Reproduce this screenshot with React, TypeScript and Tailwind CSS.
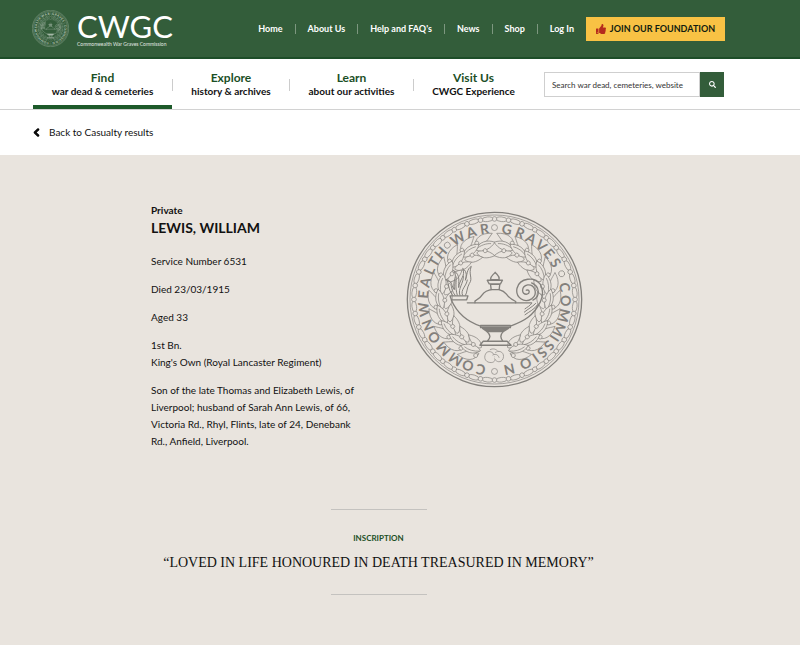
import { FaChevronLeft, FaSearch, FaThumbsUp } from "react-icons/fa";

const topLinks = ["Home", "About Us", "Help and FAQ's", "News", "Shop", "Log In"];

const tabs = [
  { title: "Find", text: "war dead & cemeteries", width: "w-[139px]", active: true },
  { title: "Explore", text: "history & archives", width: "w-[116px]", active: false },
  { title: "Learn", text: "about our activities", width: "w-[123px]", active: false },
  { title: "Visit Us", text: "CWGC Experience", width: "w-[119px]", active: false },
];

// letter and its clockwise angle from the top of the seal
const sealLetters: [string, number][] = [
  ["C", 191], ["O", 202], ["M", 213], ["M", 226], ["O", 238], ["N", 249],
  ["W", 262], ["E", 274], ["A", 284], ["L", 294], ["T", 302], ["H", 311],
  ["W", 329], ["A", 341], ["R", 352],
  ["G", 10], ["R", 21], ["A", 31], ["V", 41], ["E", 50], ["S", 59],
  ["C", 80], ["O", 91], ["M", 103], ["M", 115], ["I", 123], ["S", 130],
  ["S", 138], ["I", 145], ["O", 154], ["N", 168],
];
const sealDots = [0, 69, 180, 319];
const beads = Array.from({ length: 36 }, (_, i) => i * 10);
// from the tips at the top down to the bow, so each leaf lies over the next one's stem
const leaves = Array.from({ length: 10 }, (_, i) => 160 - i * 16);

function WreathHalf() {
  return (
    <>
      {leaves.map((a) => (
        <g key={a} transform={`rotate(${a})`}>
          <path d="M0 170 C-6 194 -30 204 -62 190 C-48 182 -30 160 0 170Z" />
          <path d="M2 150 C-6 160 -34 148 -46 124 C-22 122 -2 130 2 150Z" />
          <path d="M2 160 C-14 180 -42 178 -60 162 C-46 150 -16 142 2 160Z" />
          <path d="M0 162 C-16 168 -34 168 -48 162" />
          <circle cx="-8" cy="178" r="6" />
          <circle cx="-24" cy="148" r="6" />
        </g>
      ))}
    </>
  );
}

function Seal({ className }: { className: string }) {
  return (
    <svg
      viewBox="-267 -267 534 534"
      className={className}
      stroke="currentColor"
      strokeWidth="2"
      role="img"
      aria-label="Commonwealth War Graves Commission seal"
    >
      <circle r="263" strokeWidth="4" />
      <circle r="255" />
      {beads.map((a) => (
        <g key={a} transform={`rotate(${a})`}>
          <ellipse cy="-243" rx="16" ry="7" transform="rotate(5)" />
          <circle cy="-243" r="7" />
        </g>
      ))}
      {sealDots.map((a) => (
        <circle key={a} cy="-217" r="9" transform={`rotate(${a})`} />
      ))}
      <g fill="currentColor" stroke="none" fontSize="42" fontWeight="700" textAnchor="middle">
        {sealLetters.map(([letter, a]) => (
          <text key={a} y="-200" transform={`rotate(${a})`}>
            {letter}
          </text>
        ))}
      </g>

      <g>
        <WreathHalf />
        <g transform="scale(-1 1)">
          <WreathHalf />
        </g>
        <path d="M-24 160 C-34 172 -30 188 -14 190 C-2 192 4 184 2 174 C0 162 -14 152 -24 160Z" />
        <path d="M2 160 C16 150 32 162 26 178 C20 192 6 190 0 178" />
        <path d="M-14 152 C-4 146 6 150 12 158 M-6 168 C4 162 12 168 14 176" />
      </g>

      <g fill="none" strokeWidth="4" strokeLinejoin="round" strokeLinecap="round">
        <path d="M-134 -11 H-80 L-84 1 H-130Z" />
        <path d="M-82 10 H112" />
        <path d="M-130 2 C-112 42 -84 66 -42 80 H48 C90 66 118 48 138 8 C146 -10 148 -30 138 -46 C122 -70 76 -66 68 -34 C62 -6 90 12 112 -2 C132 -16 122 -46 100 -44 C80 -40 80 -14 98 -16 C108 -18 106 -32 96 -28" />
        <path d="M112 -50 C136 -40 140 -10 116 2" />
        <path d="M-59 10 V5 C-46 -2 -40 -8 -32 -20 C-26 -26 -16 -28 -10 -30 H14 C22 -28 30 -24 36 -16 C44 -4 52 0 64 6 V10" />
        <path d="M-10 -30 L-12 -46 H16 L14 -30 M-22 -58 H24 L18 -47 H-16Z M-12 -60 C-12 -72 -4 -74 2 -82 C8 -74 16 -72 14 -60Z" />
        <path d="M-42 78 H48 V85 H-42Z" />
        <path d="M-36 87 H42 L26 97 H-22Z" fill="currentColor" />
        <path d="M-22 97 C-10 108 -12 116 -22 126 H26 C16 116 16 108 26 97 M-34 126 H38 L50 138 H-44Z M-42 138 H48" />
        <path d="M90 38 C102 28 112 24 124 12 M92 46 C106 36 120 30 130 16 M92 28 C100 22 106 20 112 12" strokeWidth="3" />
      </g>

      <g fill="none" strokeWidth="3">
        <path d="M-126 -12 C-142 -34 -136 -50 -146 -60 C-124 -54 -132 -38 -120 -30 C-130 -56 -108 -70 -124 -88 C-100 -74 -110 -50 -108 -36 C-106 -62 -86 -70 -96 -94 C-80 -82 -86 -68 -88 -58 C-82 -74 -84 -92 -70 -100 C-80 -76 -64 -64 -76 -48 C-84 -34 -82 -22 -88 -12" />
        <path d="M-118 -12 C-130 -26 -128 -36 -132 -46 M-112 -12 C-120 -40 -114 -52 -116 -70 M-104 -12 C-112 -32 -92 -50 -94 -72 M-96 -12 C-104 -30 -84 -40 -82 -60" />
      </g>
    </svg>
  );
}

function Header() {
  return (
    <header className="flex h-[59px] items-center justify-between border-b-2 border-[#1d4d28] bg-[#335d3a] pl-8 pr-[75px] text-white">
      <a href="#" className="flex items-center gap-2">
        <Seal className="size-[37px] fill-[#335d3a] text-[#c3d0c5]" />
        <span className="flex flex-col whitespace-nowrap">
          <span className="text-[31px] leading-[30px]">CWGC</span>
          <span className="text-[5px] leading-[6px] text-[#e2e8e3]">
            Commonwealth War Graves Commission
          </span>
        </span>
      </a>
      <nav className="flex items-center">
        <ul className="flex items-center text-[9px] leading-[10px] font-bold whitespace-nowrap">
          {topLinks.map((link, i) => (
            <li key={link} className={i === 0 ? "px-3" : "border-l border-[#7d977f] px-3"}>
              <a href="#">{link}</a>
            </li>
          ))}
        </ul>
        <button
          type="button"
          className="flex h-6 w-[139px] items-center justify-center gap-1 bg-[#f8c244] text-[9px] font-bold whitespace-nowrap text-[#101c10]"
        >
          <FaThumbsUp className="size-[10px] text-[#b52b1d]" />
          JOIN OUR FOUNDATION
        </button>
      </nav>
    </header>
  );
}

function MainNav() {
  return (
    <div className="flex h-[51px] items-start justify-between border-b border-[#d2d2d2] bg-white pl-[33px] pr-[76px]">
      <nav>
        <ul className="flex">
          {tabs.map((tab) => (
            <li key={tab.title} className="flex">
              <a
                href="#"
                className={`${tab.width} h-[50px] border-b-4 pt-3 text-center whitespace-nowrap ${
                  tab.active ? "border-[#1d5a2a]" : "border-transparent"
                }`}
              >
                <span className="block text-[12px] leading-[14px] font-bold text-[#1b4f26]">{tab.title}</span>
                <span className="block text-[10px] leading-[12px] font-bold">{tab.text}</span>
              </a>
              {tab.title !== "Visit Us" && <span className="mt-5 h-3 w-px bg-[#cccccc]" />}
            </li>
          ))}
        </ul>
      </nav>
      <form className="mt-[13px] flex h-[25px] w-[180px]">
        <input
          type="search"
          aria-label="Search"
          placeholder="Search war dead, cemeteries, website"
          className="min-w-0 flex-1 border border-[#cfcfcf] pl-[7px] text-[8px] text-black placeholder:text-[#333333]"
        />
        <button
          type="submit"
          aria-label="Submit search"
          className="flex w-6 items-center justify-center bg-[#335d3a] text-white"
        >
          <FaSearch className="size-[7px]" />
        </button>
      </form>
    </div>
  );
}

export default function App() {
  return (
    <div className="min-h-screen bg-white font-[Lato,sans-serif] text-[10px] text-[#111111]">
      <Header />
      <MainNav />
      <div className="flex h-[45px] items-center pl-8">
        <a href="#" className="flex items-center gap-2">
          <FaChevronLeft className="size-[9px] stroke-black stroke-[60px]" />
          Back to Casualty results
        </a>
      </div>

      <main className="bg-[#e9e4de] pr-[43px] pb-[50px]">
        <div className="flex justify-center gap-[38px] pt-12">
          <section className="w-[217px]">
            <p className="leading-[14px] font-bold">Private</p>
            <h1 className="text-[14px] leading-[22px] font-bold">LEWIS, WILLIAM</h1>
            <div className="flex flex-col gap-[11px] pt-[14px] leading-[17px]">
              <p>Service Number 6531</p>
              <p>Died 23/03/1915</p>
              <p>Aged 33</p>
              <p>
                1st Bn.
                <br />
                King's Own (Royal Lancaster Regiment)
              </p>
              <p>
                Son of the late Thomas and Elizabeth Lewis, of Liverpool; husband of Sarah Ann
                Lewis, of 66, Victoria Rd., Rhyl, Flints, late of 24, Denebank Rd., Anfield,
                Liverpool.
              </p>
            </div>
          </section>
          <div className="w-[200px] pt-2">
            <Seal className="size-[177px] fill-[#e9e4de] text-[#83807c]" />
          </div>
        </div>

        <section className="flex flex-col items-center pt-[59px] text-center">
          <hr className="w-24 border-[#c4c2bf]" />
          <h2 className="pt-[22px] text-[8px] leading-[12px] font-bold text-[#1b4f26]">INSCRIPTION</h2>
          <p className="pt-[9px] pb-[21px] font-['Liberation_Serif',serif] text-[14px] leading-[20px]">
            “LOVED IN LIFE HONOURED IN DEATH TREASURED IN MEMORY”
          </p>
          <hr className="w-24 border-[#c4c2bf]" />
        </section>
      </main>
    </div>
  );
}
